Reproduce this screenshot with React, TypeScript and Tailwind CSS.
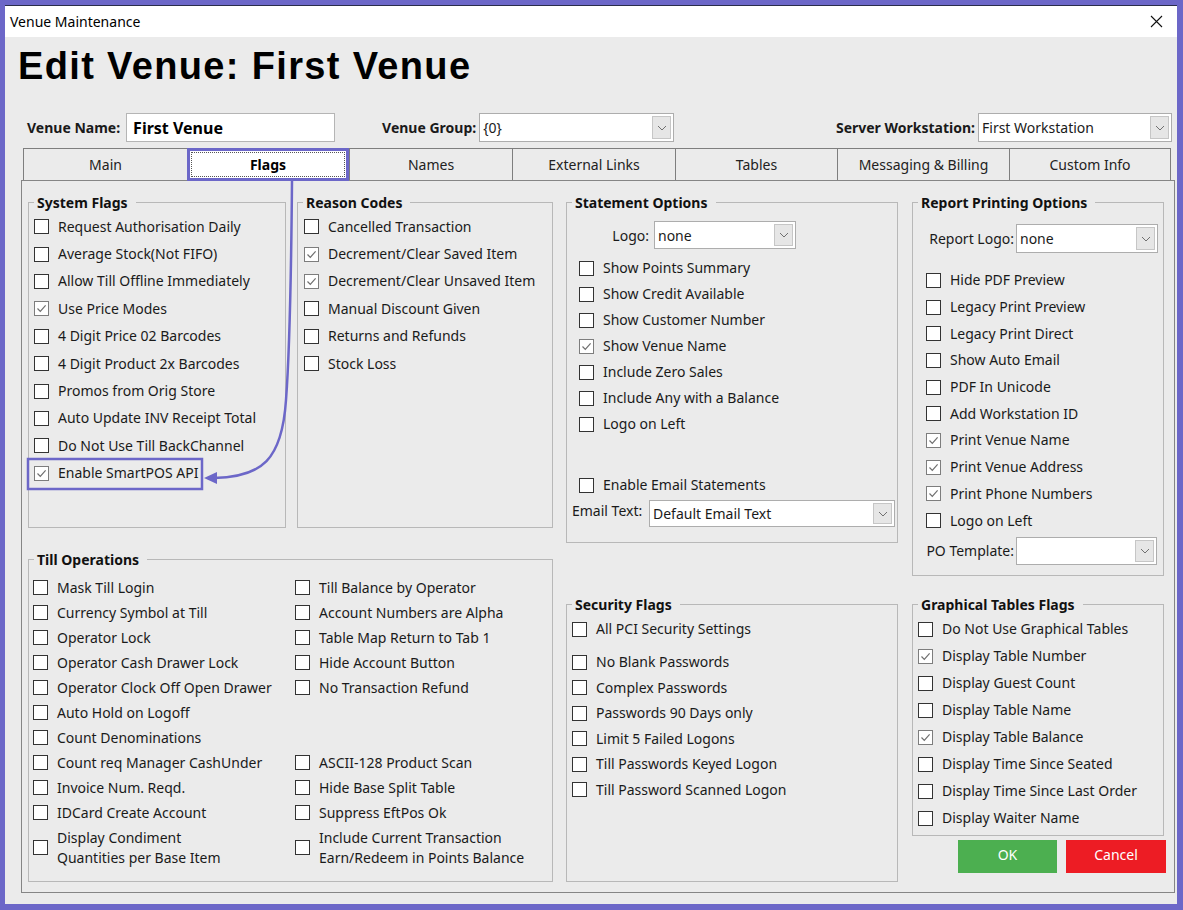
import clsx from 'clsx';
import type { ReactNode } from 'react';

const PURPLE = '#6c67c8';

function Chevron() {
  return (
    <svg width="10" height="6" viewBox="0 0 10 6">
      <path d="M1 1l4 4 4-4" fill="none" stroke="#707070" strokeWidth="1" />
    </svg>
  );
}

function Select({ value, className, bold }: { value?: string; className: string; bold?: boolean }) {
  return (
    <div className={clsx('flex items-stretch border border-[#adadad] bg-white p-[2px]', className)}>
      <span className={clsx('flex flex-1 items-center truncate pl-[1px] text-[14px] text-[#1a1a1a]', bold && 'font-bold')}>
        {value}
      </span>
      <span className="flex w-[19px] items-center justify-center border border-[#c6c6c6] bg-[#e6e6e6]">
        <Chevron />
      </span>
    </div>
  );
}

function Box({ checked }: { checked?: boolean }) {
  return (
    <span
      className={clsx(
        'flex h-[15px] w-[15px] shrink-0 items-center justify-center border bg-white',
        checked ? 'border-[#7d7d7d]' : 'border-[#333333]',
      )}
    >
      {checked && (
        <svg width="11" height="11" viewBox="0 0 11 11">
          <path d="M1.5 5.5 4.3 8.3 9.6 2.4" fill="none" stroke="#6f6f6f" strokeWidth="1.2" />
        </svg>
      )}
    </span>
  );
}

function Check({ label, checked, className }: { label: ReactNode; checked?: boolean; className: string }) {
  return (
    <div className={clsx('flex items-center gap-[9px]', className)}>
      <Box checked={checked} />
      <span className="whitespace-nowrap leading-[20px]">{label}</span>
    </div>
  );
}

function Group({ title, className, children }: { title: string; className: string; children?: ReactNode }) {
  return (
    <fieldset className={clsx('shrink-0 border border-[#b8b8b8]', className)}>
      <legend className="ml-[5px] pl-[3px] pr-[8px] text-[14px] font-bold leading-[19px] text-[#111]">{title}</legend>
      {children}
    </fieldset>
  );
}

const systemFlags: [string, boolean][] = [
  ['Request Authorisation Daily', false],
  ['Average Stock(Not FIFO)', false],
  ['Allow Till Offline Immediately', false],
  ['Use Price Modes', true],
  ['4 Digit Price 02 Barcodes', false],
  ['4 Digit Product 2x Barcodes', false],
  ['Promos from Orig Store', false],
  ['Auto Update INV Receipt Total', false],
  ['Do Not Use Till BackChannel', false],
  ['Enable SmartPOS API', true],
];

const reasonCodes: [string, boolean][] = [
  ['Cancelled Transaction', false],
  ['Decrement/Clear Saved Item', true],
  ['Decrement/Clear Unsaved Item', true],
  ['Manual Discount Given', false],
  ['Returns and Refunds', false],
  ['Stock Loss', false],
];

const statement: [string, boolean][] = [
  ['Show Points Summary', false],
  ['Show Credit Available', false],
  ['Show Customer Number', false],
  ['Show Venue Name', true],
  ['Include Zero Sales', false],
  ['Include Any with a Balance', false],
  ['Logo on Left', false],
];

const report: [string, boolean][] = [
  ['Hide PDF Preview', false],
  ['Legacy Print Preview', false],
  ['Legacy Print Direct', false],
  ['Show Auto Email', false],
  ['PDF In Unicode', false],
  ['Add Workstation ID', false],
  ['Print Venue Name', true],
  ['Print Venue Address', true],
  ['Print Phone Numbers', true],
  ['Logo on Left', false],
];

const security = [
  'No Blank Passwords',
  'Complex Passwords',
  'Passwords 90 Days only',
  'Limit 5 Failed Logons',
  'Till Passwords Keyed Logon',
  'Till Password Scanned Logon',
];

const graphical: [string, boolean][] = [
  ['Do Not Use Graphical Tables', false],
  ['Display Table Number', true],
  ['Display Guest Count', false],
  ['Display Table Name', false],
  ['Display Table Balance', true],
  ['Display Time Since Seated', false],
  ['Display Time Since Last Order', false],
  ['Display Waiter Name', false],
];

const tillLeft = [
  'Mask Till Login',
  'Currency Symbol at Till',
  'Operator Lock',
  'Operator Cash Drawer Lock',
  'Operator Clock Off Open Drawer',
  'Auto Hold on Logoff',
  'Count Denominations',
  'Count req Manager CashUnder',
  'Invoice Num. Reqd.',
  'IDCard Create Account',
];

const tillRight = [
  'Till Balance by Operator',
  'Account Numbers are Alpha',
  'Table Map Return to Tab 1',
  'Hide Account Button',
  'No Transaction Refund',
  null,
  null,
  'ASCII-128 Product Scan',
  'Hide Base Split Table',
  'Suppress EftPos Ok',
];

const tabs = [
  { label: 'Main', w: 'w-[164px]' },
  { label: 'Flags', w: 'w-[162px]' },
  { label: 'Names', w: 'w-[163px]' },
  { label: 'External Links', w: 'w-[163px]' },
  { label: 'Tables', w: 'w-[162px]' },
  { label: 'Messaging & Billing', w: 'w-[172px]' },
  { label: 'Custom Info', w: 'w-[162px]' },
];

export default function App() {
  return (
    <div className="relative h-[910px] w-[1183px] overflow-hidden bg-[#6c67c8] pl-[5px] pt-[5px] font-['Noto_Sans',sans-serif] text-[14px] text-[#1a1a1a]">
      <div className="flex h-[899px] w-[1172px] flex-col border-t border-[#2a2d4a] bg-[#ebebeb]">
        {/* title bar */}
        <div className="flex h-[31px] shrink-0 items-center justify-between bg-white pl-[5px] pr-[14px]">
          <span className="text-[14px] text-black">Venue Maintenance</span>
          <svg width="13" height="13" viewBox="0 0 13 13">
            <path d="M1 1l11 11M12 1 1 12" stroke="#111" strokeWidth="1.1" />
          </svg>
        </div>

        <h1 className="ml-[13px] mt-[10px] font-['Liberation_Sans',Arial,sans-serif] text-[38px] font-bold leading-none tracking-[1.35px] text-black">
          Edit Venue: First Venue
        </h1>

        {/* header fields */}
        <div className="mt-[28px] flex h-[29px] items-center pl-[22px] pr-[5px]">
          <span className="font-bold">Venue Name:</span>
          <div className="ml-[6px] flex h-[29px] w-[209px] items-center border border-[#b5b5b5] bg-white pl-[6px] text-[16px] font-bold text-black">
            First Venue
          </div>
          <span className="ml-[47px] font-bold">Venue Group:</span>
          <Select value="{0}" className="ml-[3px] h-[29px] w-[195px]" />
          <div className="flex-1" />
          <span className="font-bold">Server Workstation:</span>
          <Select value="First Workstation" className="ml-[3px] h-[29px] w-[194px]" />
        </div>

        {/* tabs */}
        <div className="ml-[18px] mt-[6px] flex h-[32px]">
          {tabs.map((t, i) =>
            t.label === 'Flags' ? (
              <div key={t.label} className={clsx('relative z-10 -mb-[1px] h-[33px] border-[3px] border-[#6c67c8] bg-white p-[1px]', t.w)}>
                <div className="flex h-full items-center justify-center border border-dotted border-[#555] font-bold text-black">
                  Flags
                </div>
              </div>
            ) : (
              <div
                key={t.label}
                className={clsx(
                  'flex items-center justify-center border-l border-t border-[#7e7e7e] text-[#222]',
                  t.w,
                  i === tabs.length - 1 && 'border-r',
                )}
              >
                {t.label}
              </div>
            ),
          )}
        </div>

        {/* tab page */}
        <div className="ml-[16px] flex h-[713px] w-[1154px] border border-[#858585] pl-[6px] pt-[12px]">
          {/* left block */}
          <div className="flex w-[525px] shrink-0 flex-col">
            <div className="flex gap-[11px]">
              <Group title="System Flags" className="h-[335px] w-[258px]">
                <div className="mt-[1px] flex flex-col pl-[5px]">
                  {systemFlags.map(([l, c]) => (
                    <Check key={l} label={l} checked={c} className="h-[27.4px]" />
                  ))}
                </div>
              </Group>
              <Group title="Reason Codes" className="h-[335px] w-[256px]">
                <div className="mt-[1px] flex flex-col pl-[6px]">
                  {reasonCodes.map(([l, c]) => (
                    <Check key={l} label={l} checked={c} className="h-[27.4px]" />
                  ))}
                </div>
              </Group>
            </div>
            <Group title="Till Operations" className="mt-[22px] h-[332px] w-[525px]">
              <div className="mt-[6px] grid grid-cols-[262px_1fr] pl-[4px]">
                <div className="flex flex-col">
                  {tillLeft.map((l) => (
                    <Check key={l} label={l} className="h-[25px]" />
                  ))}
                  <Check
                    label={
                      <>
                        Display Condiment
                        <br />
                        Quantities per Base Item
                      </>
                    }
                    className="h-[45px]"
                  />
                </div>
                <div className="flex flex-col">
                  {tillRight.map((l, i) =>
                    l ? <Check key={l} label={l} className="h-[25px]" /> : <div key={i} className="h-[25px]" />,
                  )}
                  <Check
                    label={
                      <>
                        Include Current Transaction
                        <br />
                        Earn/Redeem in Points Balance
                      </>
                    }
                    className="h-[45px]"
                  />
                </div>
              </div>
            </Group>
          </div>

          {/* column 3 */}
          <div className="ml-[13px] flex w-[332px] shrink-0 flex-col">
            <Group title="Statement Options" className="h-[350px] w-[332px]">
              <div className="mt-[9px] flex items-center">
                <span className="w-[82px] shrink-0 text-right">Logo:</span>
                <Select value="none" className="ml-[5px] h-[28px] w-[142px]" />
              </div>
              <div className="mt-[6px] flex flex-col pl-[12px]">
                {statement.map(([l, c]) => (
                  <Check key={l} label={l} checked={c} className="h-[26px]" />
                ))}
                <Check label="Enable Email Statements" className="mt-[35px] h-[26px]" />
              </div>
              <div className="mt-[2px] flex items-start pl-[5px]">
                <span className="mt-[1px] w-[77px] shrink-0 whitespace-nowrap leading-[19px]">Email Text:</span>
                <Select value="Default Email Text" className="h-[27px] w-[246px]" />
              </div>
            </Group>
            <Group title="Security Flags" className="mt-[52px] h-[287px] w-[332px]">
              <div className="mt-[2.5px] flex flex-col pl-[5px]">
                <Check label="All PCI Security Settings" className="h-[25px]" />
                <div className="h-[8px]" />
                {security.map((l) => (
                  <Check key={l} label={l} className="h-[25.5px]" />
                ))}
              </div>
            </Group>
          </div>

          {/* column 4 */}
          <div className="ml-[14px] flex w-[252px] shrink-0 flex-col">
            <Group title="Report Printing Options" className="h-[383px] w-[252px]">
              <div className="mt-[12px] flex items-center justify-end pr-[5px]">
                <span className="whitespace-nowrap">Report Logo:</span>
                <Select value="none" className="ml-[2px] h-[29px] w-[142px]" />
              </div>
              <div className="mt-[14px] flex flex-col pl-[13px]">
                {report.map(([l, c]) => (
                  <Check key={l} label={l} checked={c} className="h-[26.7px]" />
                ))}
              </div>
              <div className="mt-[3px] flex items-center justify-end pr-[6px]">
                <span className="whitespace-nowrap">PO Template:</span>
                <Select className="ml-[2px] h-[28px] w-[141px]" />
              </div>
            </Group>
            <Group title="Graphical Tables Flags" className="mt-[19px] h-[241px] w-[252px]">
              <div className="mt-[1.5px] flex flex-col pl-[5px]">
                {graphical.map(([l, c]) => (
                  <Check key={l} label={l} checked={c} className="h-[27px]" />
                ))}
              </div>
            </Group>
            <div className="mt-[4px] flex gap-[9px] pl-[46px]">
              <button className="flex h-[33px] w-[99px] shrink-0 items-center justify-center bg-[#4caf50] pb-[5px] text-white">
                OK
              </button>
              <button className="flex h-[33px] w-[100px] shrink-0 items-center justify-center bg-[#ed1c24] pb-[5px] text-white">
                Cancel
              </button>
            </div>
          </div>
        </div>
      </div>

      {/* annotation */}
      <svg className="pointer-events-none absolute left-0 top-0" width="1183" height="910" viewBox="0 0 1183 910">
        <rect x="28" y="459" width="174" height="30" fill="none" stroke={PURPLE} strokeWidth="2.5" />
        <path d="M292 181 C291 300 289 360 286 400 C282 460 262 477 214 478" fill="none" stroke={PURPLE} strokeWidth="2.5" />
        <path d="M204 478 L217 472 L217 484 Z" fill={PURPLE} />
      </svg>
    </div>
  );
}
